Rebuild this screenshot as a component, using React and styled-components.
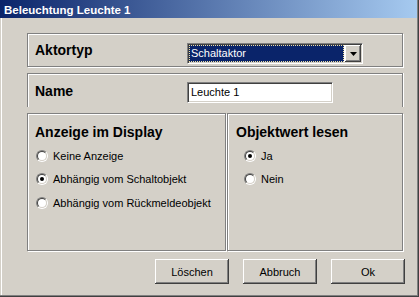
import React from "react";
import styled, { createGlobalStyle } from "styled-components";

const GlobalStyle = createGlobalStyle`
  html, body {
    margin: 0;
    padding: 0;
    background: #d4d0c8;
  }
  body {
    font-family: "Liberation Sans", Arial, sans-serif;
  }
`;

const Window = styled.div`
  width: 419px;
  height: 297px;
  box-sizing: border-box;
  background: #d4d0c8;
  border-right: 1px solid #404040;
  border-bottom: 1px solid #404040;
  box-shadow: inset -1px -1px 0 #808080, inset 1px 0 0 #d4d0c8,
    inset 2px 0 0 #ffffff;
  display: flex;
  flex-direction: column;
  overflow: hidden;
`;

const TitleBar = styled.div`
  height: 18px;
  margin-right: 1px;
  box-sizing: border-box;
  padding: 2px 0 0 4px;
  background: linear-gradient(to right, #0a246a, #a6caf0);
  color: #ffffff;
  font-weight: bold;
  font-size: 11.5px;
  line-height: 16px;
  white-space: nowrap;
`;

const Content = styled.div`
  display: flex;
  flex-direction: column;
  gap: 6px;
  padding: 15px 0 0 27px;
`;

const Group = styled.div`
  box-sizing: border-box;
  width: ${(p) => p.$width || 376}px;
  height: ${(p) => p.$height || 34}px;
  border: 1px solid #808080;
  border-bottom: ${(p) => (p.$open ? "none" : "1px solid #808080")};
  box-shadow: ${(p) => (p.$open ? "1px 0 0 #ffffff" : "1px 1px 0 #ffffff")},
    inset 1px 1px 0 #ffffff;
  padding-left: ${(p) => p.$pad || 7}px;
  display: flex;
  align-items: flex-start;
`;

const Label = styled.div`
  width: 152px;
  margin-top: ${(p) => p.$top}px;
  font-size: 14px;
  font-weight: bold;
  line-height: 21px;
  color: #000000;
`;

const ComboBox = styled.div`
  margin-top: 9px;
  width: 176px;
  height: 21px;
  box-sizing: border-box;
  border: 1px solid;
  border-color: #808080 #ffffff #ffffff #808080;
  box-shadow: inset 1px 1px 0 #404040, inset -1px -1px 0 #d4d0c8;
  background: #ffffff;
  padding: 1px 1px 1px 1px;
  display: flex;
`;

const Selection = styled.div`
  flex: 1;
  box-sizing: border-box;
  background: #0a246a;
  border: 1px dotted #f0e0a0;
  color: #ffffff;
  font-size: 11px;
  line-height: 15px;
  padding-left: 1px;
  margin-right: 1px;
`;

const DropButton = styled.div`
  width: 16px;
  height: 17px;
  box-sizing: border-box;
  background: #d4d0c8;
  box-shadow: inset -1px -1px 0 #404040, inset 1px 1px 0 #ffffff,
    inset -2px -2px 0 #808080;
  display: flex;
  align-items: center;
  justify-content: center;
`;

const TextInput = styled.div`
  margin-top: 8px;
  width: 146px;
  height: 21px;
  box-sizing: border-box;
  border: 1px solid;
  border-color: #808080 #ffffff #ffffff #808080;
  box-shadow: inset 1px 1px 0 #404040, inset -1px -1px 0 #d4d0c8;
  background: #ffffff;
  padding-left: 3px;
  font-size: 11px;
  line-height: 19px;
  color: #000000;
`;

const Row = styled.div`
  display: flex;
  gap: 1px;
`;

const Column = styled.div`
  display: flex;
  flex-direction: column;
`;

const Heading = styled.div`
  margin-top: 8px;
  font-size: 14px;
  font-weight: bold;
  line-height: 21px;
  color: #000000;
  white-space: nowrap;
`;

const RadioList = styled.div`
  margin-top: 1px;
  margin-left: ${(p) => p.$indent}px;
  display: flex;
  flex-direction: column;
`;

const RadioRow = styled.div`
  height: 23.5px;
  display: flex;
  align-items: center;
  gap: 5px;
  font-size: 11px;
  color: #000000;
  white-space: nowrap;
`;

const RadioOuter = styled.span`
  width: 12px;
  height: 12px;
  box-sizing: border-box;
  border-radius: 50%;
  border: 1px solid;
  border-color: #808080 #ffffff #ffffff #808080;
  display: flex;
`;

const RadioInner = styled.span`
  flex: 1;
  border-radius: 50%;
  border: 1px solid;
  border-color: #404040 #d4d0c8 #d4d0c8 #404040;
  background: #ffffff;
  display: flex;
  align-items: center;
  justify-content: center;
`;

const Dot = styled.span`
  width: 4px;
  height: 4px;
  border-radius: 50%;
  background: #000000;
`;

const ButtonRow = styled.div`
  margin-top: 2px;
  width: 378px;
  display: flex;
  justify-content: flex-end;
  gap: 14px;
`;

const Button = styled.div`
  width: 74px;
  height: 25px;
  box-sizing: border-box;
  background: #d4d0c8;
  box-shadow: inset -1px -1px 0 #404040, inset 1px 1px 0 #ffffff,
    inset -2px -2px 0 #808080;
  display: flex;
  align-items: center;
  justify-content: center;
  font-size: 11px;
  color: #000000;
`;

function Radio({ checked, children }) {
  return (
    <RadioRow>
      <RadioOuter>
        <RadioInner>{checked && <Dot />}</RadioInner>
      </RadioOuter>
      {children}
    </RadioRow>
  );
}

export default function App() {
  return (
    <>
      <GlobalStyle />
      <Window>
        <TitleBar>Beleuchtung Leuchte 1</TitleBar>
        <Content>
          <Group>
            <Label $top={6}>Aktortyp</Label>
            <ComboBox>
              <Selection>Schaltaktor</Selection>
              <DropButton>
                <svg width="7" height="4" viewBox="0 0 7 4">
                  <path d="M0 0h7L3.5 4z" fill="#000" />
                </svg>
              </DropButton>
            </ComboBox>
          </Group>
          <Group $open>
            <Label $top={7}>Name</Label>
            <TextInput>Leuchte 1</TextInput>
          </Group>
          <Row>
            <Group $width={199} $height={138}>
              <Column>
                <Heading>Anzeige im Display</Heading>
                <RadioList $indent={1}>
                  <Radio>Keine Anzeige</Radio>
                  <Radio checked>Abhängig vom Schaltobjekt</Radio>
                  <Radio>Abhängig vom Rückmeldeobjekt</Radio>
                </RadioList>
              </Column>
            </Group>
            <Group $width={176} $height={138} $pad={8}>
              <Column>
                <Heading>Objektwert lesen</Heading>
                <RadioList $indent={8}>
                  <Radio checked>Ja</Radio>
                  <Radio>Nein</Radio>
                </RadioList>
              </Column>
            </Group>
          </Row>
          <ButtonRow>
            <Button>Löschen</Button>
            <Button>Abbruch</Button>
            <Button>Ok</Button>
          </ButtonRow>
        </Content>
      </Window>
    </>
  );
}
